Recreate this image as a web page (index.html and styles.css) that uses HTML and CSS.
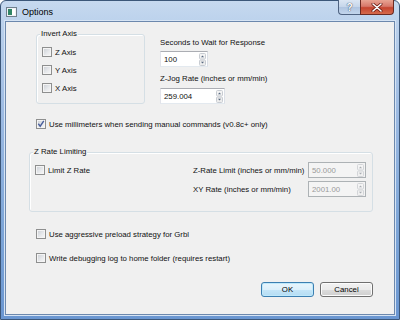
FILE: index.html
```html
<!DOCTYPE html>
<html lang="en">
<head>
  <meta charset="UTF-8" />
  <title>Options</title>
  <link rel="stylesheet" href="styles.css">
</head>
<body>

<div class="window">
  <div class="titlebar">
    <svg class="app-icon" width="11" height="10" viewBox="0 0 11 10">
      <rect x="0.5" y="0.5" width="10" height="9" fill="#eef2f5" stroke="#6f7f8d"/>
      <rect x="2" y="2" width="4" height="6" fill="#2f8566"/>
      <rect x="6" y="2" width="3" height="6" fill="#ffffff"/>
    </svg>
    <span class="title">Options</span>
    <div class="caption">
      <div class="cap help">?</div>
      <div class="cap close">
        <svg width="12" height="9" viewBox="0 0 12 9">
          <path d="M2 1 L10 8 M10 1 L2 8" stroke="#6b1d14" stroke-width="3" stroke-linecap="round"/>
          <path d="M2 1 L10 8 M10 1 L2 8" stroke="#ffffff" stroke-width="1.6" stroke-linecap="round"/>
        </svg>
      </div>
    </div>
  </div>

  <div class="client">
    <div class="top">
      <fieldset class="group invert">
        <legend>Invert Axis</legend>
        <label class="check row"><span class="box"></span>Z Axis</label>
        <label class="check row"><span class="box"></span>Y Axis</label>
        <label class="check row"><span class="box"></span>X Axis</label>
      </fieldset>

      <div class="fields">
        <div class="field-label">Seconds to Wait for Response</div>
        <div class="spin short">
          <span class="value">100</span>
          <svg class="arrows" width="7" height="13" viewBox="0 0 7 13">
            <rect x="0.5" y="0.5" width="6" height="5.5" rx="1" fill="#f3f3f3" stroke="#c8ccd2"/>
            <rect x="0.5" y="7" width="6" height="5.5" rx="1" fill="#ececec" stroke="#c8ccd2"/>
            <path d="M2 4.2 L3.5 2.4 L5 4.2Z" fill="#56677f"/>
            <path d="M2 8.8 L3.5 10.6 L5 8.8Z" fill="#56677f"/>
          </svg>
        </div>
        <div class="field-label second">Z-Jog Rate (inches or mm/min)</div>
        <div class="spin long">
          <span class="value">259.004</span>
          <svg class="arrows" width="7" height="13" viewBox="0 0 7 13">
            <rect x="0.5" y="0.5" width="6" height="5.5" rx="1" fill="#f3f3f3" stroke="#c8ccd2"/>
            <rect x="0.5" y="7" width="6" height="5.5" rx="1" fill="#ececec" stroke="#c8ccd2"/>
            <path d="M2 4.2 L3.5 2.4 L5 4.2Z" fill="#56677f"/>
            <path d="M2 8.8 L3.5 10.6 L5 8.8Z" fill="#56677f"/>
          </svg>
        </div>
      </div>
    </div>

    <label class="check line mm">
      <span class="box">
        <svg width="8" height="8" viewBox="0 0 8 8">
          <path d="M1.3 3.8 L3.2 6.2 L6.8 0.8" fill="none" stroke="#4a5f9c" stroke-width="1.4"/>
        </svg>
      </span>Use millimeters when sending manual commands (v0.8c+ only)
    </label>

    <fieldset class="group zrate">
      <legend>Z Rate Limiting</legend>
      <div class="zrate-body">
        <label class="check line"><span class="box"></span>Limit Z Rate</label>
        <div class="rates">
          <span class="rate-label">Z-Rate Limit (inches or mm/min)</span>
          <div class="spin disabled">
            <span class="value">50.000</span>
            <svg class="arrows" width="7" height="13" viewBox="0 0 7 13">
              <rect x="0.5" y="0.5" width="6" height="5.5" rx="1" fill="#f4f4f4" stroke="#d3d5d8"/>
              <rect x="0.5" y="7" width="6" height="5.5" rx="1" fill="#f0f0f0" stroke="#d3d5d8"/>
              <path d="M2 4.2 L3.5 2.4 L5 4.2Z" fill="#a9adb3"/>
              <path d="M2 8.8 L3.5 10.6 L5 8.8Z" fill="#a9adb3"/>
            </svg>
          </div>
          <span class="rate-label">XY Rate (inches or mm/min)</span>
          <div class="spin disabled">
            <span class="value">2001.00</span>
            <svg class="arrows" width="7" height="13" viewBox="0 0 7 13">
              <rect x="0.5" y="0.5" width="6" height="5.5" rx="1" fill="#f4f4f4" stroke="#d3d5d8"/>
              <rect x="0.5" y="7" width="6" height="5.5" rx="1" fill="#f0f0f0" stroke="#d3d5d8"/>
              <path d="M2 4.2 L3.5 2.4 L5 4.2Z" fill="#a9adb3"/>
              <path d="M2 8.8 L3.5 10.6 L5 8.8Z" fill="#a9adb3"/>
            </svg>
          </div>
        </div>
      </div>
    </fieldset>

    <label class="check line preload"><span class="box"></span>Use aggressive preload strategy for Grbl</label>
    <label class="check line debug"><span class="box"></span>Write debugging log to home folder (requires restart)</label>

    <div class="actions">
      <button class="btn default">OK</button>
      <button class="btn">Cancel</button>
    </div>
  </div>
</div>

</body>
</html>
```

FILE: styles.css
```css
* {
  box-sizing: border-box;
}

body {
  margin: 0;
  padding: 0;
  width: 400px;
  height: 320px;
  overflow: hidden;
  font-family: 'Liberation Sans', Arial, sans-serif;
  font-size: 7.8px;
  color: #111;
}

.window {
  width: 400px;
  height: 320px;
  display: flex;
  flex-direction: column;
  border: 1px solid #3c5779;
  border-radius: 6px 6px 0 0;
  background: linear-gradient(to bottom, #c6d9ef 0, #b8cfeb 30px, #9dbbe3 110px, #7ea6d8 220px, #6a96d1 320px);
}

/* title bar */
.titlebar {
  height: 20px;
  display: flex;
  align-items: flex-start;
  flex: none;
}

.app-icon {
  margin: 6px 0 0 5px;
  flex: none;
}

.title {
  margin: 5px 0 0 5px;
  font-size: 9px;
  line-height: 12px;
  color: #000;
}

.caption {
  margin: -1px 5px 0 auto;
  display: flex;
}

.cap {
  height: 15px;
  border: 1px solid #4f6381;
  border-top: none;
  display: flex;
  align-items: center;
  justify-content: center;
}

.help {
  width: 22px;
  border-right: none;
  border-radius: 0 0 0 4px;
  background: linear-gradient(to bottom, #dbe6f3 0, #c5d5ea 50%, #afc4e0 51%, #c2d5ec 100%);
  color: #fff;
  font-size: 10px;
  font-weight: bold;
  text-shadow: 0 0 1px #394b66, 0 0 1px #394b66;
}

.close {
  width: 34px;
  border-radius: 0 0 4px 0;
  border-color: #6b2a22;
  background: linear-gradient(to bottom, #e8a493 0, #d7786a 45%, #c5442f 55%, #d56a4c 100%);
}

/* client area */
.client {
  flex: 1;
  margin: 0 4px 4px 4px;
  border: 1px solid #6c88ad;
  box-shadow: 0 0 0 1px #d6e4f4;
  background: #f0f0f0;
  display: flex;
  flex-direction: column;
}

.top {
  display: flex;
  margin: 7px 0 0 30px;
}

.group {
  margin: 0;
  border: 1px solid #d5dfe5;
  border-radius: 3px;
  box-shadow: inset 1px 1px 0 #fff;
  min-width: 0;
}

.group legend {
  margin-left: -2px;
  padding: 0 1px;
  line-height: 10px;
  background: #f0f0f0;
}

.invert {
  width: 109px;
  padding: 4px 0 4px 5px;
}

.row {
  height: 18px;
}

.check {
  display: flex;
  align-items: center;
  white-space: nowrap;
}

.line {
  height: 12px;
  margin-left: 30px;
}

.box {
  width: 10px;
  height: 10px;
  flex: none;
  margin-right: 3px;
  border: 1px solid #8e8f8f;
  background: linear-gradient(135deg, #c9cdd3 0, #e6e8eb 55%, #f8f8f8 100%);
  box-shadow: inset 0 0 0 1px #f4f4f4;
  display: flex;
  align-items: center;
  justify-content: center;
}

.fields {
  margin-left: 15px;
  padding-top: 9px;
}

.field-label {
  line-height: 10px;
}

.field-label.second {
  margin-top: 7px;
}

.spin {
  height: 16px;
  margin-top: 3px;
  display: flex;
  align-items: center;
  border: 1px solid;
  border-color: #abadb3 #dbdfe6 #e3e9ef #e2e3ea;
  background: #fff;
}

.spin .value {
  flex: 1;
  padding-left: 3px;
}

.spin .arrows {
  flex: none;
  margin-right: 1px;
}

.short {
  width: 48px;
}

.long {
  width: 65px;
  margin-top: 4px;
}

.spin.disabled {
  width: 58px;
  margin: 0;
  border-color: #adb2b5;
  background: #f4f4f4;
  color: #9a9a9a;
}

.mm {
  margin-top: 14px;
}

.zrate {
  width: 344px;
  margin-left: 23px;
  margin-top: 17px;
  padding: 5px 6px 14px 5px;
}

.zrate-body {
  display: flex;
  align-items: flex-start;
}

.zrate-body .line {
  margin: 2px 0 0 0;
}

.rates {
  margin-left: auto;
  display: grid;
  grid-template-columns: 115px 58px;
  row-gap: 3px;
  align-items: center;
}

.preload {
  margin-top: 16px;
}

.debug {
  margin-top: 12px;
}

.actions {
  display: flex;
  justify-content: flex-end;
  gap: 6px;
  margin: 18px 21px 0 0;
}

.btn {
  width: 53px;
  height: 15px;
  padding: 0;
  font-family: inherit;
  font-size: 7.8px;
  color: #000;
  border: 1px solid #707070;
  border-radius: 3px;
  background: linear-gradient(to bottom, #f2f2f2 0, #ebebeb 50%, #dddddd 51%, #cfcfcf 100%);
  box-shadow: inset 0 0 0 1px #fcfcfc;
}

.btn.default {
  border-color: #3c7fb1;
  background: linear-gradient(to bottom, #e9f5fc 0, #dcf0fb 50%, #c5e6f8 51%, #b4dcf3 100%);
  box-shadow: inset 0 0 0 1px #bfe9fb;
}
```
